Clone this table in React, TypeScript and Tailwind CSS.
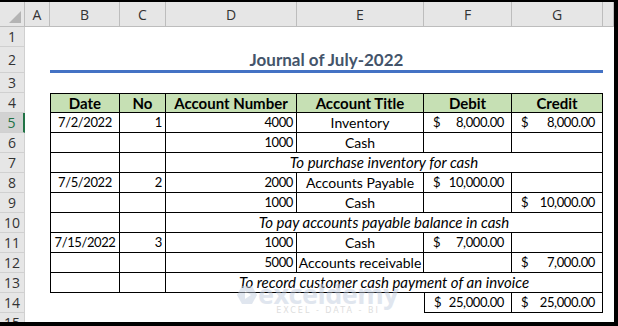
import React from "react";
import clsx from "clsx";

type Entry = {
  date?: string;
  no?: string;
  acct?: string;
  title?: string;
  debit?: string;
  credit?: string;
  note?: string;
};

const entries: { row: number; e: Entry }[] = [
  { row: 5, e: { date: "7/2/2022", no: "1", acct: "4000", title: "Inventory", debit: "8,000.00", credit: "8,000.00" } },
  { row: 6, e: { acct: "1000", title: "Cash" } },
  { row: 7, e: { note: "To purchase inventory for cash" } },
  { row: 8, e: { date: "7/5/2022", no: "2", acct: "2000", title: "Accounts Payable", debit: "10,000.00" } },
  { row: 9, e: { acct: "1000", title: "Cash", credit: "10,000.00" } },
  { row: 10, e: { note: "To pay accounts payable balance in cash" } },
  { row: 11, e: { date: "7/15/2022", no: "3", acct: "1000", title: "Cash", debit: "7,000.00" } },
  { row: 12, e: { acct: "5000", title: "Accounts receivable", credit: "7,000.00" } },
  { row: 13, e: { note: "To record customer cash payment of an invoice" } },
];

const cols = ["A", "B", "C", "D", "E", "F", "G", ""];

function RowHead({ n, active }: { n: number; active?: boolean }) {
  return (
    <div
      className={clsx(
        "flex items-center justify-center border-b border-r border-[#d0d0d0] text-[14px] font-['Open_Sans',sans-serif]",
        active
          ? "bg-[#d2d2d2] text-[#217346] border-r-2 border-r-[#217346]"
          : "bg-[#e6e6e6] text-[#333]"
      )}
    >
      {n}
    </div>
  );
}

// digits in Lato run wider than Calibri, so numbers get a smaller size
const num = "text-[13px] tracking-[-0.4px]";

function Money({ v, className }: { v?: string; className?: string }) {
  return (
    <div className={clsx("flex items-center justify-between border-r border-b border-black pl-[9px] pr-[7px]", num, className)}>
      {v && (
        <>
          <span>$</span>
          <span>{v}</span>
        </>
      )}
    </div>
  );
}

const td = "flex items-center border-r border-b border-black";

export default function App() {
  return (
    <div className="w-[618px] h-[326px] overflow-hidden bg-white border-t-2 border-r-4 border-b-4 border-black relative">
      <div className="grid grid-cols-[25px_25px_70px_46px_131px_127px_88px_91px_1fr] grid-rows-[25px_20px_26px_repeat(13,20px)] text-[14px] text-black font-['Lato',sans-serif]">
        {/* column headers */}
        <div className="relative bg-[#e6e6e6] border-b border-r border-[#bdbdbd]">
          <div className="absolute right-[3px] bottom-[3px] w-0 h-0 border-l-[12px] border-l-transparent border-b-[12px] border-b-[#b4b4b4]" />
        </div>
        {cols.map((c, i) => (
          <div
            key={i}
            className="flex items-center justify-center bg-[#e6e6e6] border-b border-r border-[#bdbdbd] text-[14px] text-[#333] font-['Open_Sans',sans-serif]"
          >
            {c}
          </div>
        ))}

        {/* row 1 */}
        <RowHead n={1} />
        <div className="col-span-8" />

        {/* row 2 title */}
        <RowHead n={2} />
        <div />
        <div className="col-span-6 flex items-center justify-center border-b-[3px] border-[#4472c4] text-[17px] font-bold text-[#44546a] pt-[2px]">
          Journal of July-2022
        </div>
        <div />

        {/* row 3 */}
        <RowHead n={3} />
        <div className="col-span-8" />

        {/* row 4 header */}
        <RowHead n={4} />
        <div />
        {["Date", "No", "Account Number", "Account Title", "Debit", "Credit"].map((h, i) => (
          <div
            key={h}
            className={clsx(td, "justify-center border-t bg-[#c6e0b4] font-bold text-[15px]", i === 0 && "border-l")}
          >
            {h}
          </div>
        ))}
        <div />

        {entries.map(({ row, e }) => (
          <React.Fragment key={row}>
            <RowHead n={row} active={row === 5} />
            <div />
            <div className={clsx(td, num, "justify-center border-l")}>{e.date}</div>
            <div className={clsx(td, num, "justify-end pr-[3px]")}>{e.no}</div>
            {e.note ? (
              <div className={clsx(td, "col-span-4 justify-center italic text-[15px]")}>{e.note}</div>
            ) : (
              <>
                <div className={clsx(td, num, "justify-end pr-[3px]")}>{e.acct}</div>
                <div className={clsx(td, "justify-center whitespace-nowrap")}>{e.title}</div>
                <Money v={e.debit} />
                <Money v={e.credit} />
              </>
            )}
            <div />
          </React.Fragment>
        ))}

        {/* row 14 totals */}
        <RowHead n={14} />
        <div className="col-span-5" />
        <Money v="25,000.00" className="border-l" />
        <Money v="25,000.00" />
        <div />

        {/* row 15 */}
        <RowHead n={15} />
        <div className="col-span-8" />
      </div>

      {/* watermark */}
      <div className="absolute left-[236px] top-[281px] flex items-start opacity-50 pointer-events-none">
        <svg width="22" height="20" viewBox="0 0 22 20" className="mt-[2px]">
          <path d="M6 1 L16 1 L21 10 L16 19 L6 19 L1 10 Z" fill="#c3cee0" />
          <path d="M9 6 L15 10 L9 14 Z" fill="#ffffff" />
        </svg>
        <div className="flex flex-col items-center">
          <span className="text-[27px] leading-[22px] font-bold text-[#c3cee0] font-['Open_Sans',sans-serif] tracking-[-0.5px]">
            exceldemy
          </span>
          <span className="mt-[1px] text-[8px] leading-[9px] tracking-[2px] text-[#bdbdbd] font-['DejaVu_Sans',sans-serif]">
            EXCEL - DATA - BI
          </span>
        </div>
      </div>
    </div>
  );
}
